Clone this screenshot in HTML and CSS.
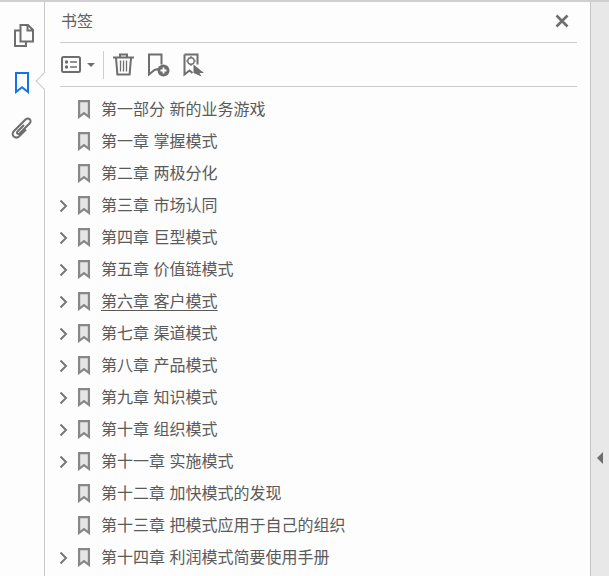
FILE: index.html
```html
<!DOCTYPE html>
<html lang="zh">
<head>
<meta charset="utf-8">
<title>书签</title>
<link rel="stylesheet" href="styles.css">
</head>
<body>
<div class="app">
  <nav class="rail">
    <svg class="rail-icon pages" width="20" height="23" viewBox="0 0 20 23"><path d="M6.500 1h7.500l5 5v11.500H6.500z M13.500 1v5.500H19" fill="#fdfdfd" stroke="#6e6e6e" stroke-width="2"/><path d="M6 6.500H1V22h11v-4" fill="none" stroke="#6e6e6e" stroke-width="2"/></svg>
    <svg class="rail-icon mark" width="14" height="22" viewBox="0 0 14 22"><path d="M1 1h12v19l-6-4.800L1 20z" fill="none" stroke="#1473e6" stroke-width="2"/></svg>
    <svg class="rail-icon clip" width="22" height="22" viewBox="0 0 22 22"><path d="M13 8 6.500 14.500c-1.500 1.500.5 3.500 2 2L18.500 6.500c3-3-1-7-4-4L3 14c-4 4 1.500 9 5.500 5L15 12.500" fill="none" stroke="#6e6e6e" stroke-width="2"/></svg>
    <span class="notch"></span>
  </nav>
  <main class="panel">
    <header class="title-bar">
      <h1 class="title">书签</h1>
      <svg class="close" width="14" height="14" viewBox="0 0 14 14"><path d="M1.500 1.500l11 11M12.500 1.500l-11 11" stroke="#6e6e6e" stroke-width="2.600"/></svg>
    </header>
    <div class="toolbar">
      <svg width="20" height="17" viewBox="0 0 20 17"><rect x="1" y="1" width="18" height="15" rx="1.500" fill="none" stroke="#6e6e6e" stroke-width="2"/><circle cx="5.500" cy="6" r="1.700" fill="#6e6e6e"/><circle cx="5.500" cy="11" r="1.700" fill="#6e6e6e"/><path d="M9 6h7M9 11h7" stroke="#6e6e6e" stroke-width="1.600"/></svg>
      <span class="caret"></span>
      <span class="divider"></span>
      <svg class="trash" width="21" height="23" viewBox="0 0 21 23"><path d="M0 4.500h21M7 4V1.500h7V4" fill="none" stroke="#6e6e6e" stroke-width="2"/><path d="M3 5l1.400 16.500h12.200L18 5" fill="none" stroke="#6e6e6e" stroke-width="2"/><path d="M7.500 7.500v11M10.500 7.500v11M13.500 7.500v11" stroke="#6e6e6e" stroke-width="1.300"/></svg>
      <svg class="add" width="23" height="24" viewBox="0 0 23 24"><path d="M11.500 16 7.500 17 2 21.500V1.500h12.500v10" fill="none" stroke="#6e6e6e" stroke-width="2"/><circle cx="16.500" cy="17.500" r="6" fill="#6e6e6e"/><path d="M13.500 17.500h6M16.500 14.500v6" stroke="#fff" stroke-width="1.800"/></svg>
      <svg class="addsel" width="21" height="24" viewBox="0 0 21 24"><path d="M1.500 1.500h13v10M1.500 1.500v20l5-4 3 2.500" fill="none" stroke="#6e6e6e" stroke-width="2"/><circle cx="8" cy="8" r="3.200" fill="none" stroke="#6e6e6e" stroke-width="1.400"/><path d="M8 3v1.500M8 11.500V13M3 8h1.500M11.500 8H13" stroke="#6e6e6e" stroke-width="1.200"/><path d="M10.500 11.500 21 20h-4.500l2 3.500-8-3.500z" fill="#6e6e6e"/></svg>
    </div>
    <ul class="tree">
      <li class="row"><span class="chev none"></span><svg class="bm" width="12" height="19" viewBox="0 0 12 19"><use href="#bm"/></svg><span class="label">第一部分 新的业务游戏</span></li>
      <li class="row"><span class="chev none"></span><svg class="bm" width="12" height="19" viewBox="0 0 12 19"><use href="#bm"/></svg><span class="label">第一章 掌握模式</span></li>
      <li class="row"><span class="chev none"></span><svg class="bm" width="12" height="19" viewBox="0 0 12 19"><use href="#bm"/></svg><span class="label">第二章 两极分化</span></li>
      <li class="row"><svg class="chev" width="9" height="14" viewBox="0 0 9 14"><use href="#ch"/></svg><svg class="bm" width="12" height="19" viewBox="0 0 12 19"><use href="#bm"/></svg><span class="label">第三章 市场认同</span></li>
      <li class="row"><svg class="chev" width="9" height="14" viewBox="0 0 9 14"><use href="#ch"/></svg><svg class="bm" width="12" height="19" viewBox="0 0 12 19"><use href="#bm"/></svg><span class="label">第四章 巨型模式</span></li>
      <li class="row"><svg class="chev" width="9" height="14" viewBox="0 0 9 14"><use href="#ch"/></svg><svg class="bm" width="12" height="19" viewBox="0 0 12 19"><use href="#bm"/></svg><span class="label">第五章 价值链模式</span></li>
      <li class="row"><svg class="chev" width="9" height="14" viewBox="0 0 9 14"><use href="#ch"/></svg><svg class="bm" width="12" height="19" viewBox="0 0 12 19"><use href="#bm"/></svg><span class="label current">第六章 客户模式</span></li>
      <li class="row"><svg class="chev" width="9" height="14" viewBox="0 0 9 14"><use href="#ch"/></svg><svg class="bm" width="12" height="19" viewBox="0 0 12 19"><use href="#bm"/></svg><span class="label">第七章 渠道模式</span></li>
      <li class="row"><svg class="chev" width="9" height="14" viewBox="0 0 9 14"><use href="#ch"/></svg><svg class="bm" width="12" height="19" viewBox="0 0 12 19"><use href="#bm"/></svg><span class="label">第八章 产品模式</span></li>
      <li class="row"><svg class="chev" width="9" height="14" viewBox="0 0 9 14"><use href="#ch"/></svg><svg class="bm" width="12" height="19" viewBox="0 0 12 19"><use href="#bm"/></svg><span class="label">第九章 知识模式</span></li>
      <li class="row"><svg class="chev" width="9" height="14" viewBox="0 0 9 14"><use href="#ch"/></svg><svg class="bm" width="12" height="19" viewBox="0 0 12 19"><use href="#bm"/></svg><span class="label">第十章 组织模式</span></li>
      <li class="row"><svg class="chev" width="9" height="14" viewBox="0 0 9 14"><use href="#ch"/></svg><svg class="bm" width="12" height="19" viewBox="0 0 12 19"><use href="#bm"/></svg><span class="label">第十一章 实施模式</span></li>
      <li class="row"><span class="chev none"></span><svg class="bm" width="12" height="19" viewBox="0 0 12 19"><use href="#bm"/></svg><span class="label">第十二章 加快模式的发现</span></li>
      <li class="row"><span class="chev none"></span><svg class="bm" width="12" height="19" viewBox="0 0 12 19"><use href="#bm"/></svg><span class="label">第十三章 把模式应用于自己的组织</span></li>
      <li class="row"><svg class="chev" width="9" height="14" viewBox="0 0 9 14"><use href="#ch"/></svg><svg class="bm" width="12" height="19" viewBox="0 0 12 19"><use href="#bm"/></svg><span class="label">第十四章 利润模式简要使用手册</span></li>
    </ul>
  </main>
  <aside class="gutter"><span class="gutter-arrow"></span></aside>
</div>
<svg class="defs" width="0" height="0">
  <defs>
    <path id="bm" d="M1.100 1.100h9.800v15.800L6 13.200l-4.900 3.700z" fill="#e6e6e6" stroke="#888" stroke-width="2.200"/>
    <path id="ch" d="M1.500 1.500 7 7l-5.500 5.500" fill="none" stroke="#777" stroke-width="2"/>
  </defs>
</svg>
</body>
</html>
```
FILE: styles.css
```css
* { box-sizing: border-box; }
html, body { margin: 0; height: 100%; overflow: hidden; }
body { font-family: "Noto Sans CJK SC", "Liberation Sans", sans-serif; background: #fdfdfd; color: #555; }
.app { display: flex; height: 576px; border-top: 2px solid #cfcfcf; }
.rail { position: relative; width: 45px; flex: none; border-right: 1px solid #c8c8c8; display: flex; flex-direction: column; align-items: center; padding-top: 22px; padding-left: 3px; }
.rail-icon { display: block; }
.rail-icon.mark { margin-top: 25px; margin-left: -4px; }
.rail-icon.clip { margin-top: 23px; margin-left: -3px; }
.notch { position: absolute; left: 38px; top: 73px; width: 12px; height: 12px; background: #fdfdfd; border-left: 1px solid #c8c8c8; border-bottom: 1px solid #c8c8c8; transform: rotate(45deg); }
.panel { width: 546px; flex: none; border-right: 1px solid #c8c8c8; padding: 0 13px 0 15px; overflow: hidden; }
.title-bar { height: 41px; border-bottom: 1px solid #cacaca; display: flex; align-items: center; justify-content: space-between; padding: 0 8px 0 1px; }
.title { margin: -4px 0 0; font-size: 16px; font-weight: 400; color: #606060; line-height: 20px; }
.close { margin-top: -3px; }
.toolbar { height: 44px; border-bottom: 1px solid #cacaca; display: flex; align-items: center; padding-left: 1px; }
.caret { width: 0; height: 0; margin-left: 6px; border-top: 4px solid #6e6e6e; border-left: 4px solid transparent; border-right: 4px solid transparent; }
.divider { width: 1px; height: 28px; background: #cfcfcf; margin: 0 9px 0 8px; }
.trash { margin-right: 13px; }
.add { margin-right: 13px; }
.tree { list-style: none; margin: 6px 0 0; padding: 0; }
.row { height: 32px; display: flex; align-items: center; }
.chev { width: 9px; flex: none; margin: 1px 9px 0 -1px; }
.chev.none { display: block; height: 14px; }
.bm { flex: none; margin-left: 1px; margin-right: 11px; }
.label { font-size: 16px; line-height: 22px; color: #5a5a5a; white-space: nowrap; word-spacing: 1px; margin-top: -2px; }
.label.current { text-decoration: underline; text-underline-offset: 3px; }
.gutter { flex: 1; background: #e8e8e8; position: relative; }
.gutter-arrow { position: absolute; left: 6px; top: 450px; width: 0; height: 0; border-top: 6px solid transparent; border-bottom: 6px solid transparent; border-right: 6px solid #6e6e6e; }
.defs { position: absolute; }
```
